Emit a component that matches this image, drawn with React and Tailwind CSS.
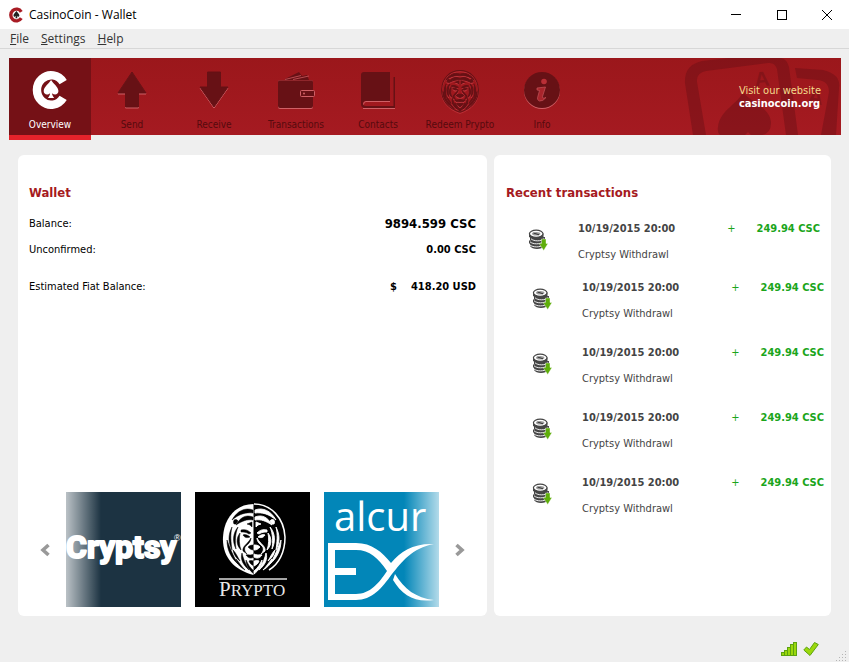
const UI = "font-['DejaVu_Sans_Condensed','DejaVu_Sans',sans-serif]";

function CoinMark({ className, ring, spade }) {
  return (
    <svg viewBox="0 0 34 38" className={className} aria-hidden="true">
      <path
        d="M29.500 11.500 A13.500 14 0 1 0 29.500 26.500"
        fill="none"
        stroke={ring}
        strokeWidth="8"
      />
      <path
        d="M18 9.500 C20 13 25 16 25 20 C25 23.500 21 24 19 22 C19 24 20 25 21 26.500 H15 C16 25 17 24 17 22 C15 24 11 23.500 11 20 C11 16 16 13 18 9.500Z"
        fill={spade}
      />
    </svg>
  );
}

function Engraved({ children }) {
  return (
    <svg viewBox="0 0 40 40" className="h-10 w-10" aria-hidden="true">
      <g transform="translate(0 1)" fill="#cf6066" stroke="#cf6066">
        {children}
      </g>
      <g fill="#671115" stroke="#671115">
        {children}
      </g>
    </svg>
  );
}

function SendIcon() {
  return (
    <Engraved>
      <path d="M20 2 L34 23 H26.500 V37 H13.500 V23 H6Z" strokeWidth="1" strokeLinejoin="round" />
    </Engraved>
  );
}

function ReceiveIcon() {
  return (
    <Engraved>
      <path d="M20 37 L34 17 H26.500 V2 H13.500 V17 H6Z" strokeWidth="1" strokeLinejoin="round" />
    </Engraved>
  );
}

function WalletIcon() {
  return (
    <svg viewBox="0 0 40 40" className="h-10 w-10" aria-hidden="true">
      <path d="M9 9 L23 2 L26 6 L31 5 L33 10 H9Z" fill="#671115" />
      <path d="M9 9.500 L25 5.500 M17 9.500 L33 6" stroke="#b9494f" fill="none" />
      <rect x="2" y="10" width="35" height="29" rx="2" fill="#cf6066" />
      <rect x="2" y="10" width="35" height="28" rx="2" fill="#671115" />
      <path d="M3 10.500 H36" stroke="#8f262b" />
      <rect x="24.500" y="20.500" width="14" height="6" rx="1" fill="#671115" stroke="#cf6066" />
      <circle cx="28" cy="23.500" r="1" fill="#cf6066" />
    </svg>
  );
}

function BookIcon() {
  return (
    <svg viewBox="0 0 40 40" className="h-10 w-10" aria-hidden="true">
      <path
        d="M6 2 H32 V31 H8 Q5 31 5 33.500 Q5 36 8 36 H35.500 V7 H37 V38 H7 Q3 38 3 34 V5 Q3 2 6 2Z"
        fill="#671115"
      />
      <path d="M32 31.500 H8 Q5.500 31.500 5.500 34.500 M5 38.500 H37" fill="none" stroke="#cf6066" />
    </svg>
  );
}

function LionHalf() {
  return (
    <>
      <path d="M28 6 C20 3 12 7 7 16 C14 10 21 8 28 9Z" />
      <path d="M28 13 C20 10 15 14 11 21 C17 17 22 15 28 16Z" />
      <path d="M9 20 C7 16 11 14 13 17 L11 20Z" />
      <path d="M22 20 L27 18 V23 L25 21Z" />
      <path d="M16 26 C20 25 23 26 26 29 L24 30 C21 28 19 28 16 28Z" />
      <path d="M18 31 C20 30 23 31 25 33 C22 34 20 34 18 31Z" />
      <path d="M26 34 C26 38 23 40 20 43 C19 46 20 48 22 50 L18 47 C17 42 23 40 26 34Z" />
      <path d="M23 43 C25 41 27 41 29 41 V46 C26 46 25 45 23 43Z" />
      <path d="M21 51 C23 50 24 52 29 50 V53 C26 55 23 54 21 51Z" />
      <path d="M24 57 C26 56 28 57 29 57 V62 C27 61 25 60 24 57Z" />
      <path d="M15 29 C11 34 11 41 16 46 C14 41 14 34 15 29Z" />
      <path d="M13 23 C8 29 7 37 11 45 C10 38 10 30 13 23Z" />
      <path d="M7 23 C3 31 3 38 7 46 C6 38 5 31 7 23Z" />
      <path d="M2 36 C2 46 6 54 13 60 C8 52 5 44 2 36Z" />
      <path d="M8 46 C9 51 11 54 15 57 C12 52 11 49 8 46Z" />
      <path d="M17 49 C15 55 18 61 24 66 C20 59 18 54 17 49Z" />
      <path d="M11 55 C12 60 15 63 20 66 C16 62 14 58 11 55Z" />
      <path d="M21 56 C21 62 25 67 29 70 V67 C25 64 23 60 21 56Z" />
    </>
  );
}

const MANE_EDGE = "M29 0 C12 0 1 14 0 32 C-1 50 9 65 29 72";

function LionMask() {
  return (
    <>
      <LionHalf />
      <path d={MANE_EDGE} fill="none" />
      <g transform="translate(58 0) scale(-1 1)">
        <LionHalf />
        <path d={MANE_EDGE} fill="none" />
      </g>
    </>
  );
}

function LionIcon() {
  return (
    <svg
      viewBox="-1 -1 60 76"
      preserveAspectRatio="none"
      className="h-11 w-[38px]"
      aria-hidden="true"
    >
      <g fill="#c43840" stroke="#c43840" strokeWidth="1.200" transform="translate(0 2)">
        <LionMask />
      </g>
      <g fill="#671115" stroke="#671115" strokeWidth="1.600">
        <LionMask />
      </g>
    </svg>
  );
}

function InfoIcon() {
  return (
    <svg viewBox="0 0 40 40" className="h-10 w-10" aria-hidden="true">
      <circle cx="20" cy="21" r="18" fill="#cf6066" />
      <circle cx="20" cy="20" r="18" fill="#671115" />
      <circle cx="22" cy="11.500" r="2.800" fill="#b92f36" />
      <path
        d="M15 18 L23.500 17 L20.500 26.500 Q20 29 24 27.500 Q21 31.500 17.500 31 Q14.500 30 16 26 L17.500 20.500 L15 20Z"
        fill="#a8242b"
        stroke="#c4545a"
        strokeWidth="0.700"
      />
    </svg>
  );
}

function HomeIcon() {
  return <CoinMark className="h-10 w-9" ring="#fff" spade="#fff" />;
}

const tabs = [
  { name: "Overview", Icon: HomeIcon, active: true },
  { name: "Send", Icon: SendIcon },
  { name: "Receive", Icon: ReceiveIcon },
  { name: "Transactions", Icon: WalletIcon },
  { name: "Contacts", Icon: BookIcon },
  { name: "Redeem Prypto", Icon: LionIcon },
  { name: "Info", Icon: InfoIcon },
];

function Cards() {
  return (
    <svg
      viewBox="0 0 157 77"
      className="absolute right-0 top-0 h-[77px] w-[157px]"
      fill="#6d1015"
      fillOpacity="0.5"
      aria-hidden="true"
    >
      <path d="M9 77 L1 25 Q0 7 18 3 L45 0 H97 Q103 1 105 9 L114 77 H102 L93 11 Q91 4 84 5 L22 13 Q12 15 13 24 L22 77Z" />
      <path d="M111 10 L139 12 Q157 16 155 30 L152 77 H137 L145 34 Q145 23 134 22 L113 20Z" />
      <path d="M59 34 C66 44 87 50 87 65 Q87 75 78 77 H67 L64 74 L61 77 H36 Q33 74 34 69 C36 52 54 46 59 34Z" />
      <text x="71" y="29" transform="rotate(-6 71 29)" className="font-['Liberation_Sans',sans-serif] text-[21px] font-bold">
        A
      </text>
      <text x="123" y="45" transform="rotate(8 123 45)" className="font-['Liberation_Sans',sans-serif] text-[21px] font-bold">
        A
      </text>
    </svg>
  );
}

function CoinsIcon() {
  return (
    <svg viewBox="0 0 20 22" className="h-[22px] w-5 shrink-0" aria-hidden="true">
      <g fill="#454545">
        <path d="M2 14.500 V17 C4 21 14 21 16 17 V14Z" />
        <path d="M1 11.500 V14 C3 18 13 18 15.500 14 V11Z" />
        <path d="M2 8.500 V11 C4 15 15 15 17 11 V8Z" />
        <path d="M1 4.500 V7.500 C3 12 14 12 15.500 7.500 V4.500Z" />
      </g>
      <path
        d="M2 16 C5 18.500 12 18.500 15 16 M2 12.800 C5 15.500 12 15.500 15 12.800 M3 9.800 C6 12.500 13 12.500 16 9.800"
        stroke="#fff"
        strokeWidth="0.900"
        fill="none"
      />
      <ellipse cx="8.200" cy="4.800" rx="6.800" ry="3.600" fill="#fff" stroke="#454545" strokeWidth="1.200" />
      <ellipse cx="8.200" cy="4.800" rx="4.200" ry="1.800" fill="#999" />
      <path d="M5.500 4 L11 5.800" stroke="#333" />
      <path d="M13.500 10 H18 V14.500 H20 L15.700 21.500 L11 14.500 H13.500Z" fill="#5fae0b" stroke="#fff" strokeWidth="0.400" />
    </svg>
  );
}

const transactions = Array.from({ length: 5 }, (_, id) => ({
  id,
  date: "10/19/2015 20:00",
  amount: "249.94 CSC",
  note: "Cryptsy Withdrawl",
}));

function Chevron({ flip }) {
  return (
    <svg viewBox="0 0 10 14" className={flip ? "h-3.5 w-2.5 rotate-180" : "h-3.5 w-2.5"} aria-hidden="true">
      <path d="M8.500 2 L3 7 L8.500 12" fill="none" stroke="#999" strokeWidth="3.600" />
    </svg>
  );
}

function CryptsyTile() {
  return (
    <svg viewBox="0 0 115 115" className="h-[115px] w-[115px]" role="img" aria-label="Cryptsy">
      <defs>
        <linearGradient id="fadeLeft">
          <stop offset="0" stopColor="#fff" stopOpacity="0.7" />
          <stop offset="1" stopColor="#fff" stopOpacity="0" />
        </linearGradient>
      </defs>
      <rect width="115" height="115" fill="#1c3342" />
      <text
        x="0"
        y="66"
        fill="#fff"
        stroke="#fff"
        strokeWidth="2"
        strokeLinejoin="round"
        className="font-['Roboto',sans-serif] text-[32px] font-bold"
      >
        Cryptsy
      </text>
      <text x="108" y="49" fill="#fff" className="font-['Liberation_Sans',sans-serif] text-[9px]">
        ®
      </text>
      <rect width="35" height="115" fill="url(#fadeLeft)" />
    </svg>
  );
}

function PryptoTile() {
  return (
    <svg viewBox="0 0 115 115" className="h-[115px] w-[115px]" role="img" aria-label="Prypto">
      <rect width="115" height="115" />
      <g transform="translate(29 12)">
        <path d="M29.500 0 C12 0 0 14 -1 33 C-2 52 9 66 29.500 71Z" fill="#fff" />
        <g transform="translate(1 0)" stroke="#000" strokeWidth="0.500">
          <LionHalf />
        </g>
        <g transform="translate(59 0) scale(-1 1)">
          <path d="M29 0 C12 0 -1 14 -2 33 C-2 48 4 60 14 66" fill="none" stroke="#fff" strokeWidth="1.500" />
          <g fill="#fff" stroke="#fff" strokeWidth="0.900">
            <LionHalf />
          </g>
        </g>
      </g>
      <path d="M24 87 H92" stroke="#ddd" strokeWidth="1.500" />
      <text x="24" y="104" fill="#e8e8e8" className="font-['Liberation_Serif',serif] text-[21px]">
        P<tspan className="text-[17px]">RYPTO</tspan>
      </text>
    </svg>
  );
}

function AlcurexTile() {
  return (
    <svg viewBox="0 0 115 115" className="h-[115px] w-[115px] overflow-visible" role="img" aria-label="alcurEX">
      <defs>
        <linearGradient id="fadeRight">
          <stop offset="0" stopColor="#fff" stopOpacity="0" />
          <stop offset="1" stopColor="#fff" stopOpacity="0.7" />
        </linearGradient>
      </defs>
      <rect width="115" height="115" fill="#0286b8" />
      <text x="10" y="39" fill="#fff" className="font-['Open_Sans',sans-serif] text-[40px]">
        alcur
      </text>
      <path
        d="M4 51 H32 C48 51 58 60 67 71 C77 59 90 51 110 52 C88 56 78 70 68 82 C58 96 48 108 32 108 H4Z M11 58 V76 H32 V83 H11 V102 H32 C46 102 55 91 63 79 C54 66 46 58 32 58Z"
        fill="#fff"
        fillRule="evenodd"
      />
      <path d="M71 82 C80 97 92 106 110 108 C91 111 78 103 69 88Z" fill="#fff" />
      <rect x="80" width="35" height="115" fill="url(#fadeRight)" />
    </svg>
  );
}

export default function App() {
  return (
    <div className={`flex min-h-screen flex-col bg-[#efefef] text-[11px] leading-4 text-black ${UI}`}>
      <header className="flex h-[29px] items-center bg-white pl-2 font-['Open_Sans',sans-serif] text-xs">
        <CoinMark className="h-4 w-4" ring="#a81c24" spade="#222" />
        <h1 className="pl-[5px]">CasinoCoin - Wallet</h1>
        <div className="ml-auto flex">
          <button aria-label="Minimize" className="grid h-[29px] w-[46px] place-items-center">
            <svg viewBox="0 0 10 10" className="h-2.5 w-2.5"><path d="M0 4.500 H10" stroke="#000" /></svg>
          </button>
          <button aria-label="Maximize" className="grid h-[29px] w-[46px] place-items-center">
            <svg viewBox="0 0 10 10" className="h-2.5 w-2.5"><rect x="0.500" y="0.500" width="9" height="9" fill="none" stroke="#000" /></svg>
          </button>
          <button aria-label="Close" className="grid h-[29px] w-11 place-items-center">
            <svg viewBox="0 0 10 10" className="h-2.5 w-2.5"><path d="M0 0 L10 10 M10 0 L0 10" stroke="#000" /></svg>
          </button>
        </div>
      </header>

      <nav className="flex h-5 items-center gap-3 border-b border-[#d7d7d7] pl-2.5 font-['Open_Sans',sans-serif] text-xs text-[#333]">
        <button><u>F</u>ile</button>
        <button><u>S</u>ettings</button>
        <button><u>H</u>elp</button>
      </nav>

      <div className="relative mx-2 ml-[9px] mt-[9px] flex h-[77px] bg-linear-to-b from-[#9b171b] to-[#a51a21]">
        <Cards />
        {tabs.map(({ name, Icon, active }) => (
          <button
            key={name}
            className={
              active
                ? "flex h-[82px] w-[82px] flex-col items-center justify-between border-b-5 border-[#e5232b] bg-[#751116] pb-0.5 pt-3 text-white"
                : "flex h-[77px] w-[82px] flex-col items-center justify-between pb-0.5 pt-3 text-[#560a0e]"
            }
          >
            <span className="grid h-10 place-items-center"><Icon /></span>
            <span className="whitespace-nowrap text-[10px]">{name}</span>
          </button>
        ))}
        <a href="#website" className="relative ml-auto mr-5 mt-[26px] leading-[13px] text-[#f5dc8c]">
          Visit our website
          <strong className="block text-white">casinocoin.org</strong>
        </a>
      </div>

      <main className="mx-[18px] mt-5 grid flex-1 grid-cols-[469fr_337fr] gap-[7px]">
        <section className="flex flex-col rounded-md bg-white px-[11px] pb-[9px] pt-[29px]">
          <h2 className="text-[13px] font-bold leading-[18px] text-[#a51a21]">Wallet</h2>
          <dl className="grid grid-cols-[1fr_auto] pt-[9px] leading-[26px]">
            <dt>Balance:</dt>
            <dd className="text-right text-[13px] font-bold">9894.599 CSC</dd>
            <dt>Unconfirmed:</dt>
            <dd className="text-right font-bold">0.00 CSC</dd>
            <dt className="pt-[11px]">Estimated Fiat Balance:</dt>
            <dd className="flex justify-end gap-3.5 pt-[11px] font-bold"><span>$</span><span>418.20 USD</span></dd>
          </dl>
          <div className="mt-auto flex items-center justify-center gap-4">
            <button aria-label="Previous"><Chevron /></button>
            <div className="flex gap-3.5">
              <CryptsyTile />
              <PryptoTile />
              <AlcurexTile />
            </div>
            <button aria-label="Next"><Chevron flip /></button>
          </div>
        </section>

        <section className="rounded-md bg-white pt-[29px]">
          <h2 className="pl-3 text-[13px] font-bold leading-[18px] text-[#a51a21]">Recent transactions</h2>
          <ul className="pt-[19px]">
            {transactions.map(({ id, date, amount, note }) => (
              <li key={id} className="flex h-[65px] pl-[38px] pr-[7px] text-[#444] first:h-[59px] first:pl-[34px] first:pr-[11px]">
                <div className="pt-2"><CoinsIcon /></div>
                <div className="flex-1 pl-[30px]">
                  <p className="flex font-bold">
                    <time>{date}</time>
                    <span className="ml-auto pr-[21px] font-normal text-[#1ba51b]">+</span>
                    <span className="text-[#1ba51b]">{amount}</span>
                  </p>
                  <p className="pt-2.5">{note}</p>
                </div>
              </li>
            ))}
          </ul>
        </section>
      </main>

      <footer className="flex h-[46px] items-end justify-end">
        <div className="flex gap-1.5 pb-[5px]">
          <svg viewBox="0 0 16 16" className="h-4 w-4" role="img" aria-label="Connected">
            <g fill="#9bd80c" stroke="#5da310">
              <rect x="0.500" y="11.500" width="3" height="3" />
              <rect x="3.500" y="9.500" width="3" height="5" />
              <rect x="6.500" y="6.500" width="3" height="8" />
              <rect x="9.500" y="3.500" width="3" height="11" />
              <rect x="12.500" y="1.500" width="3" height="13" />
            </g>
          </svg>
          <svg viewBox="0 0 16 16" className="h-4 w-4" role="img" aria-label="Synchronized">
            <path d="M0.800 9 L3.500 6 L6.500 8.500 L11.500 1.500 L15.300 3.500 L7 14.500Z" fill="#9bd80c" stroke="#5da310" strokeLinejoin="round" />
          </svg>
        </div>
        <svg viewBox="0 0 12 12" className="ml-[17px] mr-px h-3 w-3" fill="#b5b5b5" aria-hidden="true">
          <path d="M9 1h1v1h-1z M6 4h1v1h-1z M9 4h1v1h-1z M3 7h1v1h-1z M6 7h1v1h-1z M9 7h1v1h-1z M0 10h1v1h-1z M3 10h1v1h-1z M6 10h1v1h-1z M9 10h1v1h-1z" />
        </svg>
      </footer>
    </div>
  );
}
